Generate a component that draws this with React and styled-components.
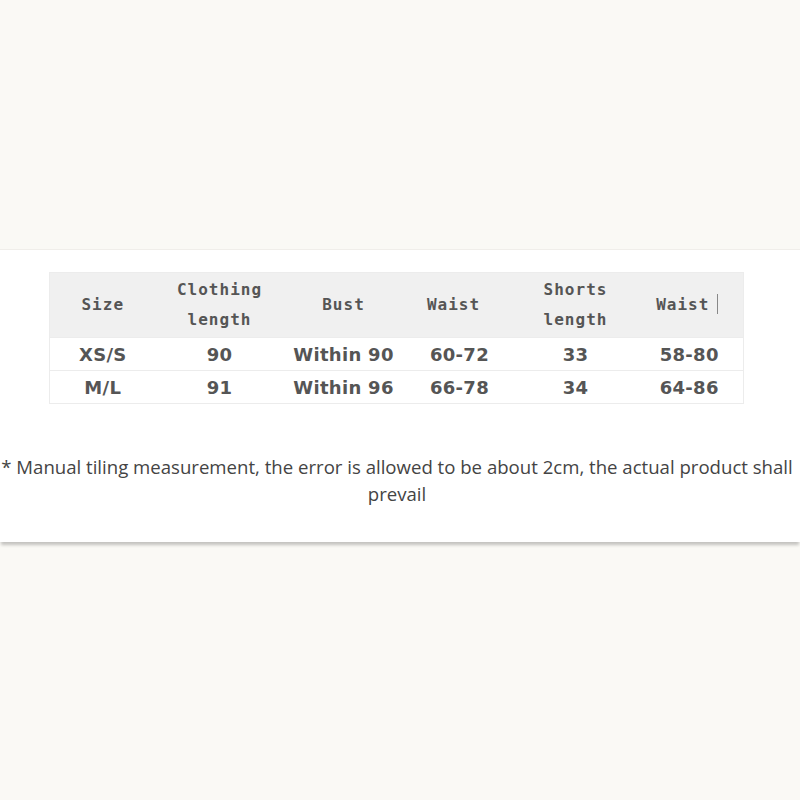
import React from "react";
import styled, { createGlobalStyle } from "styled-components";

const Global = createGlobalStyle`
  html, body { margin: 0; padding: 0; background: #faf9f5; }
  body { width: 800px; height: 800px; overflow: hidden; }
`;

const Page = styled.div`
  width: 800px;
  height: 800px;
  background: #faf9f5;
  padding-top: 249px;
  box-sizing: border-box;
`;

const Panel = styled.section`
  background: #ffffff;
  border-top: 1px solid #f0eeea;
  box-shadow: 0 4px 3px -1px rgba(0, 0, 0, 0.22);
  height: 293px;
  box-sizing: border-box;
  padding-top: 22px;
  display: flex;
  flex-direction: column;
`;

const Table = styled.table`
  margin-left: 49px;
  width: 694px;
  border-collapse: collapse;
  table-layout: fixed;
  border: 1px solid #ececec;
`;

const HeadRow = styled.tr`
  background: #f0f0f0;
  height: 65px;
`;

const Th = styled.th`
  font-family: "DejaVu Sans Mono", monospace;
  font-weight: bold;
  font-size: 16px;
  letter-spacing: 1px;
  line-height: 30px;
  color: #555;
  text-align: center;
  padding: 0;
  padding-right: ${(p) => p.$pr || 0}px;
  vertical-align: middle;
`;

const Cursor = styled.span`
  display: inline-block;
  width: 1px;
  height: 20px;
  background: #888;
  margin-left: 8px;
  vertical-align: -4px;
`;

const Row = styled.tr`
  height: 33px;
  border-top: 1px solid #ececec;
`;

const Td = styled.td`
  font-family: "DejaVu Sans", Verdana, sans-serif;
  font-weight: bold;
  font-size: 18px;
  letter-spacing: 0.3px;
  color: #555;
  text-align: center;
  padding: 0;
`;

const Note = styled.p`
  margin: 49px 0 0 -6px;
  font-family: "Open Sans", "Noto Sans", sans-serif;
  font-size: 18.6px;
  line-height: 27px;
  color: #444;
  text-align: center;
  width: 806px;
`;

const widths = [106, 128, 120, 112, 120, 108];

const rows = [
  ["XS/S", "90", "Within 90", "60-72", "33", "58-80"],
  ["M/L", "91", "Within 96", "66-78", "34", "64-86"],
];

export default function App() {
  return (
    <Page>
      <Global />
      <Panel>
        <Table>
          <colgroup>
            {widths.map((w, i) => (
              <col key={i} style={{ width: w }} />
            ))}
          </colgroup>
          <thead>
            <HeadRow>
              <Th>Size</Th>
              <Th>Clothing<br />length</Th>
              <Th>Bust</Th>
              <Th $pr={12}>Waist</Th>
              <Th>Shorts<br />length</Th>
              <Th $pr={4}>Waist<Cursor /></Th>
            </HeadRow>
          </thead>
          <tbody>
            {rows.map((r, i) => (
              <Row key={i}>
                {r.map((c, j) => (
                  <Td key={j}>{c}</Td>
                ))}
              </Row>
            ))}
          </tbody>
        </Table>
        <Note>
          * Manual tiling measurement, the error is allowed to be about 2cm, the actual product shall prevail
        </Note>
      </Panel>
    </Page>
  );
}
